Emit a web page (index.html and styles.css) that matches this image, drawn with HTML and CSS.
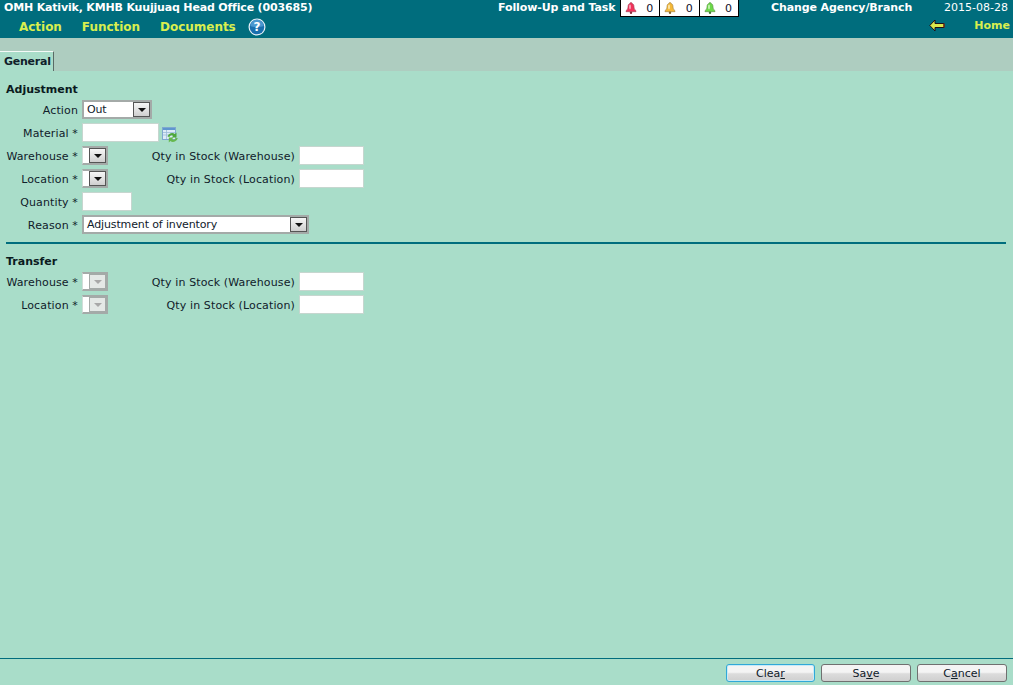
FILE: index.html
```html
<!DOCTYPE html>
<html lang="en">
<head>
<meta charset="utf-8">
<title>Adjustment</title>
<link rel="stylesheet" href="styles.css">
</head>
<body>
<div class="page">
  <header class="header">
    <div class="top-row">
      <span class="agency">OMH Kativik, KMHB Kuujjuaq Head Office (003685)</span>
      <span class="follow">Follow-Up and Task</span>
      <div class="alerts">
        <div class="alert">
          <svg class="bell" viewBox="0 0 12 12"><path d="M6 0.5c.6 0 1 .4 1 1 1.6.4 2 1.8 2 3.2 0 2 .6 3 2 4v1H1v-1c1.400-1 2-2 2-4 0-1.400.4-2.800 2-3.200 0-.6.4-1 1-1z" fill="#f0325a" stroke="#a04a5a" stroke-width=".6"/><ellipse cx="5" cy="5" rx="1" ry="2.400" fill="#f9a0b4"/><circle cx="6" cy="10.800" r="1.200" fill="#8c2a3c"/></svg>
          <span>0</span>
        </div>
        <div class="alert">
          <svg class="bell" viewBox="0 0 12 12"><path d="M6 0.5c.6 0 1 .4 1 1 1.6.4 2 1.8 2 3.2 0 2 .6 3 2 4v1H1v-1c1.400-1 2-2 2-4 0-1.400.4-2.800 2-3.200 0-.6.4-1 1-1z" fill="#f4b838" stroke="#a08040" stroke-width=".6"/><ellipse cx="5" cy="5" rx="1" ry="2.400" fill="#fbe6a8"/><circle cx="6" cy="10.800" r="1.200" fill="#8a6a2a"/></svg>
          <span>0</span>
        </div>
        <div class="alert">
          <svg class="bell" viewBox="0 0 12 12"><path d="M6 0.5c.6 0 1 .4 1 1 1.6.4 2 1.8 2 3.2 0 2 .6 3 2 4v1H1v-1c1.400-1 2-2 2-4 0-1.400.4-2.800 2-3.200 0-.6.4-1 1-1z" fill="#6cd848" stroke="#5a9048" stroke-width=".6"/><ellipse cx="5" cy="5" rx="1" ry="2.400" fill="#c4f4b0"/><circle cx="6" cy="10.800" r="1.200" fill="#3f7f30"/></svg>
          <span>0</span>
        </div>
      </div>
      <span class="change">Change Agency/Branch</span>
      <span class="date">2015-08-28</span>
    </div>
    <div class="menu-row">
      <nav class="menu">
        <a class="menu-item">Action</a>
        <a class="menu-item">Function</a>
        <a class="menu-item">Documents</a>
      </nav>
      <svg class="help" viewBox="0 0 18 18"><circle cx="9" cy="9" r="8.500" fill="#e8f2f8"/><circle cx="9" cy="9" r="7.300" fill="#1a6fae"/><path d="M2.500 8a6.500 6.500 0 0 1 13 0c-3 1.500-10 1.500-13 0z" fill="#4a97cf"/><text x="9" y="13.300" class="help-mark">?</text></svg>
      <svg class="back" viewBox="0 0 16 13"><path d="M.8 6.500 6 1v3.500h9v4H6V12z" fill="#dbe84c" stroke="#201018" stroke-width="1"/><path d="M15 4.500v4" stroke="#8a2a10" stroke-width="1.200"/></svg>
      <a class="home">Home</a>
    </div>
  </header>

  <div class="tabs">
    <div class="tab">General</div>
  </div>

  <main class="content">
    <section class="group">
      <h2 class="group-title">Adjustment</h2>
      <div class="row">
        <label class="label">Action</label>
        <div class="select w-action"><span class="value">Out</span><span class="arrow"><i class="caret"></i></span></div>
      </div>
      <div class="row">
        <label class="label">Material *</label>
        <div class="input w-material"></div>
        <svg class="lookup" viewBox="0 0 16 16"><rect x=".5" y=".5" width="13" height="12" fill="#dcebf7" stroke="#7fa8cf"/><rect x="1" y="1" width="12" height="2" fill="#5f96cf"/><path d="M1 5.500h12M1 8h12M4.500 3v9" stroke="#9bbbd8" stroke-width=".8"/><path d="M5.500 9.500a4.800 4.800 0 0 1 7.500-2.500L14.500 5.600v5h-5l1.700-1.700a2.800 2.800 0 0 0-3.900 1z" fill="#4fa83c"/><path d="M15.800 11a4.800 4.800 0 0 1-7.500 3L6.800 15.400v-5h5l-1.700 1.700a2.800 2.800 0 0 0 3.900-1.100z" fill="#66b84e"/></svg>
      </div>
      <div class="row">
        <label class="label">Warehouse *</label>
        <div class="select w-narrow"><span class="value"></span><span class="arrow"><i class="caret"></i></span></div>
        <label class="qty-label">Qty in Stock (Warehouse)</label>
        <div class="input w-qty"></div>
      </div>
      <div class="row">
        <label class="label">Location *</label>
        <div class="select w-narrow"><span class="value"></span><span class="arrow"><i class="caret"></i></span></div>
        <label class="qty-label">Qty in Stock (Location)</label>
        <div class="input w-qty"></div>
      </div>
      <div class="row">
        <label class="label">Quantity *</label>
        <div class="input w-quantity"></div>
      </div>
      <div class="row">
        <label class="label">Reason *</label>
        <div class="select w-reason"><span class="value">Adjustment of inventory</span><span class="arrow"><i class="caret"></i></span></div>
      </div>
    </section>
    <hr class="divider">
    <section class="group">
      <h2 class="group-title">Transfer</h2>
      <div class="row">
        <label class="label">Warehouse *</label>
        <div class="select w-narrow disabled"><span class="value"></span><span class="arrow"><i class="caret"></i></span></div>
        <label class="qty-label">Qty in Stock (Warehouse)</label>
        <div class="input w-qty"></div>
      </div>
      <div class="row">
        <label class="label">Location *</label>
        <div class="select w-narrow disabled"><span class="value"></span><span class="arrow"><i class="caret"></i></span></div>
        <label class="qty-label">Qty in Stock (Location)</label>
        <div class="input w-qty"></div>
      </div>
    </section>
  </main>

  <footer class="footer">
    <button class="btn btn-focus">Clea<u>r</u></button>
    <button class="btn">Sa<u>v</u>e</button>
    <button class="btn">C<u>a</u>ncel</button>
  </footer>
</div>
</body>
</html>
```

FILE: styles.css
```css
* { box-sizing: border-box; }
html, body { margin: 0; height: 100%; }
body {
  font-family: "DejaVu Sans", Verdana, sans-serif;
  font-size: 11px;
  color: #10202a;
  background: #a9ddc9;
  overflow: hidden;
}
.page { display: flex; flex-direction: column; height: 685px; }

.header { height: 38px; background: #006d7d; color: #fff; flex: none; }
.top-row { height: 17px; display: flex; align-items: flex-start; padding-left: 4px; }
.agency, .follow, .change { font-weight: bold; line-height: 16px; white-space: nowrap; }
.agency { width: 494px; letter-spacing: -0.17px; }
.follow { width: 122px; letter-spacing: -0.11px; }
.date { line-height: 16px; margin-left: 32px; }
.change { margin-left: 32px; width: 141px; letter-spacing: -0.1px; }
.alerts { display: flex; height: 17px; background: #000; gap: 1px; border: 1px solid #000; border-top: 0; width: 119px; }
.alert { flex: 1; background: #fff; display: flex; align-items: center; justify-content: space-between; padding: 0 6px 0 4px; color: #10102a; }
.bell { width: 12px; height: 12px; }

.menu-row { height: 19px; display: flex; align-items: center; padding-left: 19px; padding-right: 3px; }
.menu { display: flex; gap: 20px; }
.menu-item, .home { font-weight: bold; color: #d9ee4f; }
.menu-item { font-size: 12px; letter-spacing: -0.03px; }
.help { width: 18px; height: 18px; margin-left: 12px; margin-top: 1px; }
.help-mark { font: bold 12px "DejaVu Sans", sans-serif; fill: #fff; text-anchor: middle; }
.back { width: 16px; height: 13px; margin-left: auto; margin-right: 29px; margin-top: -3px; }
.home { margin-bottom: 2px; }

.tabs { height: 33px; background: #aecdc0; flex: none; display: flex; align-items: flex-end; }
.tab {
  height: 20px;
  width: 54px;
  padding-left: 4px;
  background: #a9ddc9;
  border-top: 1px solid #f4faf7;
  border-right: 1px solid #5a6a66;
  font-weight: bold;
  line-height: 19px;
  letter-spacing: -0.25px;
}

.content { flex: 1; padding: 12px 7px 0 6px; }
.group-title { margin: 0; height: 16px; font-size: 11px; font-weight: bold; line-height: 14px; color: #0a1a20; }
.row { height: 23px; display: flex; align-items: center; }
.label { width: 72px; margin-right: 4px; text-align: right; white-space: nowrap; flex: none; letter-spacing: 0.13px; }
.qty-label { width: 187px; margin-right: 4px; text-align: right; white-space: nowrap; flex: none; letter-spacing: 0.13px; }

.input { height: 19px; margin-bottom: 2px; background: #fff; border: 1px solid #c6d6cf; flex: none; }
.w-material { width: 77px; }
.w-qty { width: 65px; }
.w-quantity { width: 50px; }

.select { height: 19px; margin-bottom: 2px; display: flex; background: #fff; border: 2px solid #a4aaa8; flex: none; }
.select .value { flex: 1; padding-left: 3px; line-height: 15px; white-space: nowrap; overflow: hidden; letter-spacing: -0.13px; }
.arrow { width: 17px; height: 15px; background: linear-gradient(#f6f6f6, #cfcfcf); border: 1px solid #555; display: flex; align-items: center; justify-content: center; flex: none; }
.caret { width: 0; height: 0; border-left: 4px solid transparent; border-right: 4px solid transparent; border-top: 4px solid #111; }
.w-action { width: 70px; }
.w-narrow { width: 26px; border-left: 1px solid #d0ddd8; }
.w-reason { width: 227px; }
.disabled .arrow { border-color: #a4aaa8; background: #e4e8e6; }
.disabled .caret { border-top-color: #a8a8a8; }
.lookup { width: 16px; height: 16px; margin-left: 3px; margin-top: 2px; }

.divider { margin: 5px 0 11px; border: 0; height: 2px; background: #006d7d; }

.footer { height: 27px; flex: none; border-top: 1px solid #006d7d; display: flex; justify-content: flex-end; gap: 6px; padding: 5px 6px 0 0; }
.btn {
  width: 90px;
  height: 18px;
  padding: 0;
  font: 11px "DejaVu Sans", Verdana, sans-serif;
  color: #10202a;
  background: linear-gradient(#f4f4f4 0 45%, #dcdcdc 55%, #cfcfcf);
  border: 1px solid #707070;
  border-radius: 3px;
}
.btn-focus { width: 89px; border-color: #30a8d8; box-shadow: inset 0 0 0 1px #c8eaf6; }
```
